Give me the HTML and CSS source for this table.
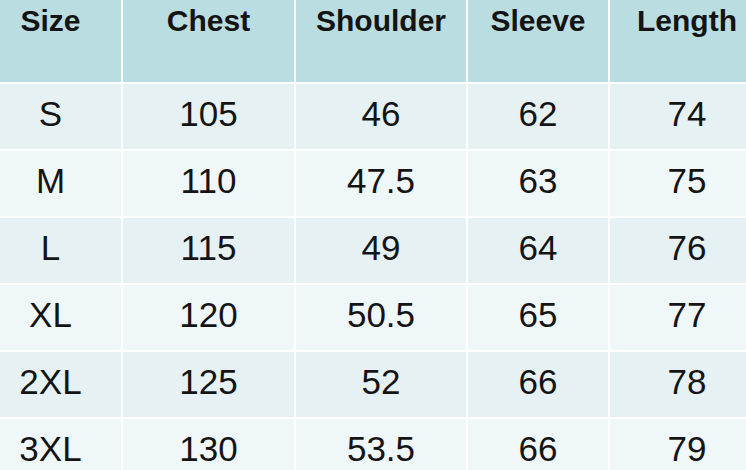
FILE: index.html
```html
<!DOCTYPE html>
<html lang="en">
<head>
<meta charset="utf-8">
<title>Size chart</title>
<link rel="stylesheet" href="styles.css">
</head>
<body>
<div class="frame">
  <div class="chart">
    <div class="cell head">Size</div>
    <div class="cell head">Chest</div>
    <div class="cell head">Shoulder</div>
    <div class="cell head">Sleeve</div>
    <div class="cell head">Length</div>

    <div class="cell odd">S</div><div class="cell odd">105</div><div class="cell odd">46</div><div class="cell odd">62</div><div class="cell odd">74</div>
    <div class="cell even">M</div><div class="cell even">110</div><div class="cell even">47.5</div><div class="cell even">63</div><div class="cell even">75</div>
    <div class="cell odd">L</div><div class="cell odd">115</div><div class="cell odd">49</div><div class="cell odd">64</div><div class="cell odd">76</div>
    <div class="cell even">XL</div><div class="cell even">120</div><div class="cell even">50.5</div><div class="cell even">65</div><div class="cell even">77</div>
    <div class="cell odd">2XL</div><div class="cell odd">125</div><div class="cell odd">52</div><div class="cell odd">66</div><div class="cell odd">78</div>
    <div class="cell even">3XL</div><div class="cell even">130</div><div class="cell even">53.5</div><div class="cell even">66</div><div class="cell even">79</div>
  </div>
</div>
</body>
</html>
```
FILE: styles.css
```css
html, body {
  margin: 0;
  padding: 0;
  background: #ffffff;
}
.frame {
  width: 746px;
  height: 470px;
  overflow: hidden;
  background: #ffffff;
}
.chart {
  margin-left: -20px;
  display: grid;
  grid-template-columns: 141px 171px 170px 140px 154px;
  grid-template-rows: 82px repeat(6, 65px);
  column-gap: 2px;
  row-gap: 2px;
  width: max-content;
  font-family: "Liberation Sans", Arial, sans-serif;
  color: #141414;
}
.cell {
  display: flex;
  justify-content: center;
  align-items: center;
  font-size: 35px;
  padding-bottom: 6px;
  box-sizing: border-box;
}
.head {
  background: #badde1;
  font-weight: bold;
  font-size: 30px;
  line-height: 30px;
  align-items: flex-start;
  padding: 6px 0 0 0;
}
.odd {
  background: #e6f1f3;
}
.even {
  background: #eff7f9;
}
```
